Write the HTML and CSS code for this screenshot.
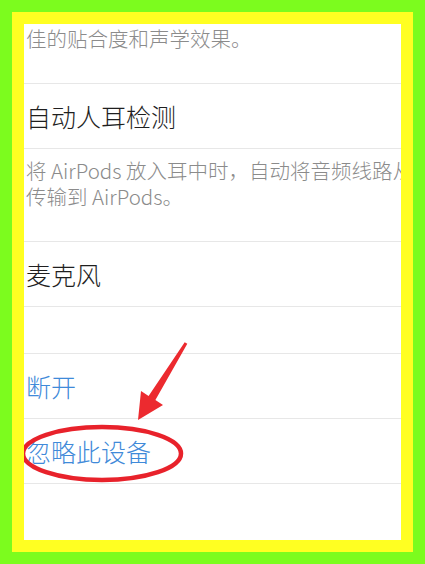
FILE: index.html
```html
<!DOCTYPE html>
<html lang="zh-CN">
<head>
<meta charset="utf-8">
<link rel="stylesheet" href="styles.css">
</head>
<body>
<div class="frame">
  <div class="inner">
    <div class="panel">
      <div class="row note-top">佳的贴合度和声学效果。</div>
      <div class="row title">自动人耳检测</div>
      <div class="row note">将 AirPods 放入耳中时，自动将音频线路从<br>传输到 AirPods。</div>
      <div class="row title">麦克风</div>
      <div class="row spacer"></div>
      <div class="row title link">断开</div>
      <div class="row title link">忽略此设备</div>
      <svg class="annot" width="377" height="516" viewBox="0 0 377 516" xmlns="http://www.w3.org/2000/svg">
        <ellipse cx="78" cy="429.5" rx="79" ry="26.5" fill="none" stroke="#e8222b" stroke-width="4.5"/>
        <polygon points="160.7,318.2 163.3,319.8 131.4,376.1 139,381 114,396 117,367 124.6,371.9" fill="#ec2a2f"/>
      </svg>
    </div>
  </div>
</div>
</body>
</html>
```

FILE: styles.css
```css
html, body {
  margin: 0;
  padding: 0;
}
body {
  width: 425px;
  height: 564px;
  font-family: "Noto Sans CJK SC", "Noto Sans", sans-serif;
}
.frame {
  box-sizing: border-box;
  width: 425px;
  height: 564px;
  padding: 12px;
  background: #7cfc1e;
}
.inner {
  box-sizing: border-box;
  height: 100%;
  padding: 12px;
  background: #ffff22;
}
.panel {
  position: relative;
  height: 100%;
  background: #ffffff;
  overflow: hidden;
}
.row {
  box-sizing: border-box;
  border-bottom: 1px solid #e7e7e7;
  padding-left: 2px;
  white-space: nowrap;
  font-weight: 300;
}
.note-top {
  height: 60px;
  padding-top: 2px;
  font-size: 20.5px;
  line-height: 25px;
  color: #8b8b8b;
}
.title {
  height: 65px;
  display: flex;
  align-items: center;
  font-size: 25px;
  color: #1f1f1f;
}
.note {
  height: 93px;
  padding-top: 8px;
  font-size: 20.5px;
  line-height: 26px;
  color: #8b8b8b;
}
.spacer {
  height: 47px;
}
.link {
  color: #3f8ad9;
}
.annot {
  position: absolute;
  left: 0;
  top: 0;
}
```
